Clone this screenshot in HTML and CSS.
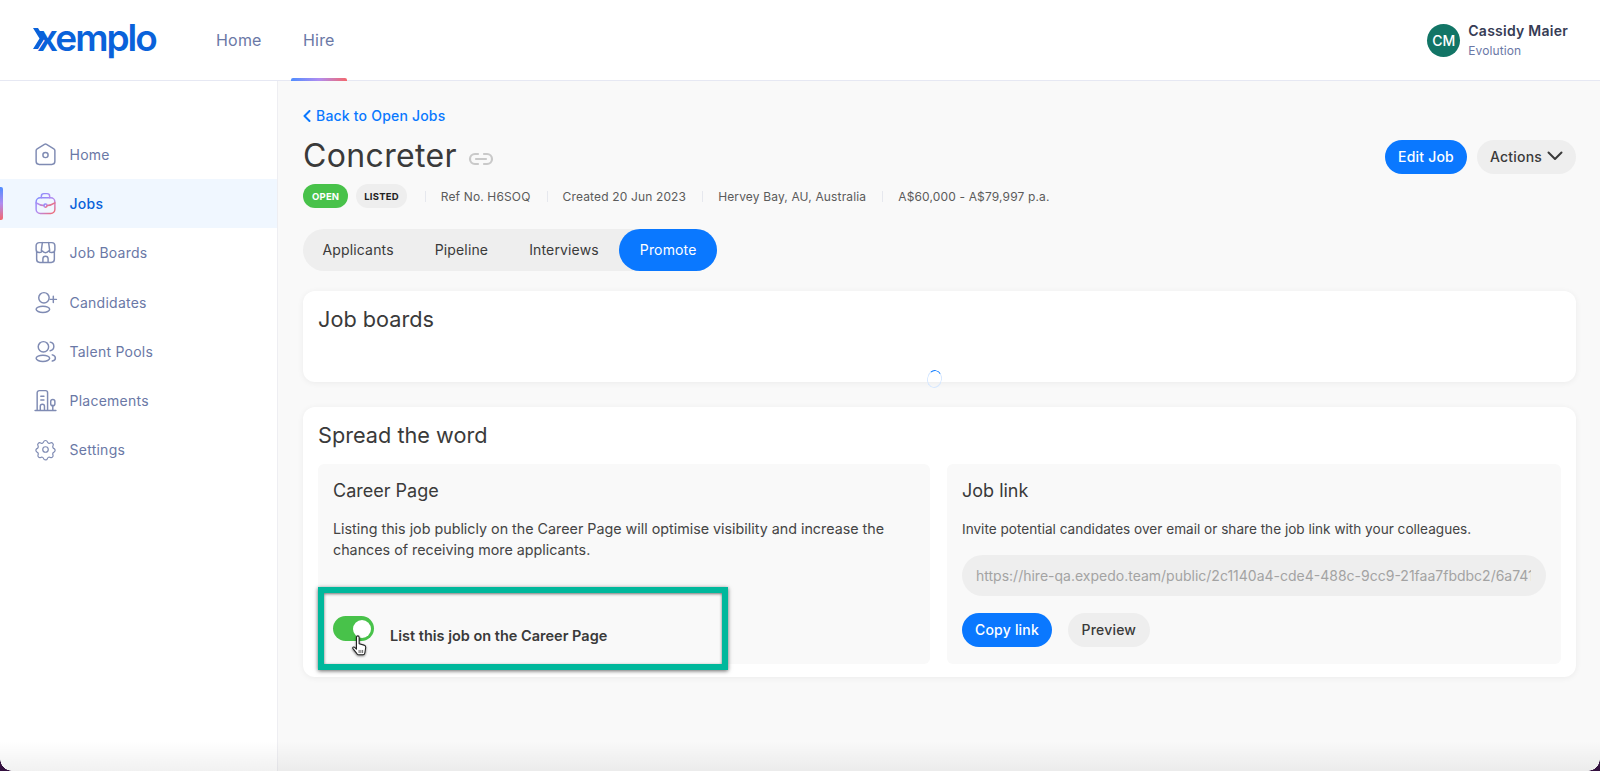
FILE: index.html
```html
<!DOCTYPE html>
<html lang="en">
<head>
<meta charset="utf-8">
<title>Concreter</title>
<link rel="stylesheet" href="styles.css">
</head>
<body>
<svg class="defs" width="0" height="0"><defs>
<linearGradient id="grad" x1="0" y1="0" x2="1" y2="1"><stop offset="0" stop-color="#7f8cff"/><stop offset=".5" stop-color="#b48bf0"/><stop offset="1" stop-color="#f4696d"/></linearGradient>
</defs></svg>
<div class="app">
  <header class="topbar">
    <div class="logo"><svg class="logo-mark" width="12" height="21" viewBox="0 0 12 21"><path d="M0 0h5l6.500 10.500L5 21H0l6.500-10.500z"/></svg><span class="logo-text">xemplo</span></div>
    <nav class="topnav">
      <a class="topnav-item">Home</a>
      <a class="topnav-item active">Hire</a>
    </nav>
    <div class="user">
      <div class="avatar">CM</div>
      <div class="user-info">
        <div class="user-name">Cassidy Maier</div>
        <div class="user-org">Evolution</div>
      </div>
    </div>
  </header>
  <div class="body">
    <aside class="sidebar">
      <a class="side-item"><svg class="ico" viewBox="0 0 24 24"><path d="M11 2.300a2 2 0 0 1 2 0l7 4.200a2 2 0 0 1 1 1.700v10.300a3 3 0 0 1-3 3H6a3 3 0 0 1-3-3V8.200a2 2 0 0 1 1-1.700z"/><circle cx="12" cy="12.500" r="2.500"/></svg>Home</a>
      <a class="side-item current"><svg class="ico ico-grad" viewBox="0 0 24 24"><rect x="3" y="6.500" width="18" height="15" rx="4"/><path d="M8 6.500V5a2.500 2.500 0 0 1 2.500-2.500h3A2.500 2.500 0 0 1 16 5v1.500M3 11.500c3 2 6 2.500 7.500 2.500M21 11.500c-3 2-6 2.500-7.500 2.500"/><circle cx="12" cy="14" r="1.500"/></svg>Jobs</a>
      <a class="side-item"><svg class="ico" viewBox="0 0 24 24"><path d="M6 2.500h12a3 3 0 0 1 3 3v3.500a3 3 0 0 1-3 3 3 3 0 0 1-3-1.500 3.500 3.500 0 0 1-6 0A3 3 0 0 1 6 12a3 3 0 0 1-3-3V5.500a3 3 0 0 1 3-3zM9 2.500 8 10M15 2.500l1 7.500M3.500 11v7.500a3 3 0 0 0 3 3h11a3 3 0 0 0 3-3V11M9.500 21.500V18a2.500 2.500 0 0 1 5 0v3.500"/></svg>Job Boards</a>
      <a class="side-item"><svg class="ico" viewBox="0 0 24 24"><circle cx="10.500" cy="7.500" r="5"/><ellipse cx="9.500" cy="18.500" rx="6.500" ry="3"/><path d="M19.500 6v6M16.500 9h6"/></svg>Candidates</a>
      <a class="side-item"><svg class="ico" viewBox="0 0 24 24"><circle cx="10" cy="7.500" r="5"/><ellipse cx="9.500" cy="18.500" rx="6.500" ry="3"/><path d="M16.500 3c2 .3 3.500 2 3.500 4.200s-1.500 3.700-3.500 4.100M18.500 15.200c2 .5 3 1.700 3 3s-1 2.600-3 3"/></svg>Talent Pools</a>
      <a class="side-item"><svg class="ico" viewBox="0 0 24 24"><path d="M2 21.500h20M4 21.500V4.500a2 2 0 0 1 2-2h6a2 2 0 0 1 2 2v17M7.500 8h3M7.500 11.500h3M7 21.500v-4a2 2 0 0 1 4 0v4M19 21.500v-5"/><rect x="17" y="11" width="4" height="6" rx="2"/></svg>Placements</a>
      <a class="side-item"><svg class="ico" viewBox="-2.500 -2.500 29 29"><circle cx="12" cy="12" r="3.200"/><path d="M9.800 3.200a2.300 2.300 0 0 1 4.400 0 2.300 2.300 0 0 0 3.400 1.300 2.300 2.300 0 0 1 3.100 3.200 2.300 2.300 0 0 0 1.300 3.300 2.300 2.300 0 0 1 0 4 2.300 2.300 0 0 0-1.300 3.400 2.300 2.300 0 0 1-3.100 2.800 2.300 2.300 0 0 0-3.400 1.300 2.300 2.300 0 0 1-4.400 0 2.300 2.300 0 0 0-3.400-1.300 2.300 2.300 0 0 1-3.100-2.800 2.300 2.300 0 0 0-1.300-3.400 2.300 2.300 0 0 1 0-4 2.300 2.300 0 0 0 1.300-3.300 2.300 2.300 0 0 1 3.100-3.200 2.300 2.300 0 0 0 3.400-1.300z"/></svg>Settings</a>
    </aside>
    <main class="main">
      <a class="back"><svg width="8" height="12" viewBox="0 0 8 12" class="back-ico"><path d="M6.500 1 1.500 6l5 5"/></svg>Back to Open Jobs</a>
      <div class="title-row">
        <h1 class="title">Concreter</h1>
        <svg class="link-ico" width="26" height="14" viewBox="0 0 26 14"><path d="M10 2H7a5 5 0 0 0 0 10h3M16 2h3a5 5 0 0 1 0 10h-3M8 7h10"/></svg>
        <div class="title-actions">
          <button class="btn btn-primary">Edit Job</button>
          <button class="btn btn-grey btn-actions">Actions<svg width="16" height="10" viewBox="0 0 16 10"><path d="M1.500 1.500 8 8l6.500-6.500"/></svg></button>
        </div>
      </div>
      <div class="meta">
        <span class="badge badge-open">OPEN</span>
        <span class="badge badge-listed">LISTED</span>
        <span class="meta-item">Ref No. H6SOQ</span>
        <span class="meta-item">Created 20 Jun 2023</span>
        <span class="meta-item">Hervey Bay, AU, Australia</span>
        <span class="meta-item">A$60,000 - A$79,997 p.a.</span>
      </div>
      <div class="tabs">
        <a class="tab">Applicants</a>
        <a class="tab">Pipeline</a>
        <a class="tab">Interviews</a>
        <a class="tab active">Promote</a>
      </div>
      <section class="card card-boards">
        <h2 class="card-title">Job boards</h2>
        <div class="spinner"></div>
      </section>
      <section class="card card-spread">
        <h2 class="card-title">Spread the word</h2>
        <div class="panels">
          <div class="panel">
            <h3 class="panel-title">Career Page</h3>
            <p class="panel-text">Listing this job publicly on the Career Page will optimise visibility and increase the chances of receiving more applicants.</p>
            <div class="toggle-row">
              <span class="toggle"><span class="knob"></span></span>
              <span class="toggle-label">List this job on the Career Page</span>
              <div class="highlight"></div>
              <svg class="cursor" width="20" height="25" viewBox="0 0 20 25"><path d="M6 2.500a1.500 1.500 0 0 1 3 0v7.500l5.500 1.500c1.500.5 2 1.500 2 2.500l-1 6.500c-.2 1.200-1 2-2 2H8.500c-1 0-1.500-.5-2-1.300L2 15.500c-.8-1.300.8-2.600 2-1.500l2 2z"/><path class="cursor-lines" d="M9 17v3.500M11 17v3.500M13 17v3.500"/></svg>
            </div>
          </div>
          <div class="panel">
            <h3 class="panel-title">Job link</h3>
            <p class="panel-text panel-text-narrow">Invite potential candidates over email or share the job link with your colleagues.</p>
            <div class="url-box"><span class="url">https://hire-qa.expedo.team/public/2c1140a4-cde4-488c-9cc9-21faa7fbdbc2/6a741</span></div>
            <div class="link-actions">
              <button class="btn btn-primary">Copy link</button>
              <button class="btn btn-grey">Preview</button>
            </div>
          </div>
        </div>
      </section>
    </main>
  </div>
  <div class="edge"></div>
</div>
</body>
</html>
```
FILE: styles.css
```css
* { box-sizing: border-box; }
html, body { margin: 0; height: 100%; }
body { font-family: Inter, "Liberation Sans", sans-serif; color: #333; background: #f9f9f9; overflow: hidden; }
.defs { position: absolute; }
.app { height: 771px; display: flex; flex-direction: column; position: relative; overflow: hidden; }

.topbar { height: 81px; flex: none; background: #fff; border-bottom: 1px solid #e6e8f3; display: flex; align-items: center; padding: 0 32px 0 33px; }
.logo { display: flex; align-items: center; width: 158px; height: 40px; position: relative; margin-top: -1px; }
.logo-mark { fill: #0a62da; flex: none; margin-top: -2px; }
.logo-text { font-weight: 600; font-size: 37px; letter-spacing: -2px; color: #0a62da; line-height: 40px; margin-top: -4px; margin-left: -8px; }
.topnav { display: flex; align-self: stretch; margin-left: 25px; }
.topnav-item { width: 71px; margin-right: -30px; display: flex; align-items: center; font-size: 16px; letter-spacing: .2px; color: #6a78a6; position: relative; padding-bottom: 1px; }
.topnav-item:first-child { width: 87px; margin-right: 0; }
.topnav-item.active::after { content: ""; position: absolute; left: -12px; width: 56px; bottom: -1px; height: 3px; border-radius: 2px 2px 0 0; background: linear-gradient(90deg, #4f8dff, #b08cf0, #f4676c); }
.user { margin-left: auto; display: flex; align-items: center; gap: 8px; }
.avatar { width: 33px; height: 33px; border-radius: 50%; background: #127566; color: #fff; font-size: 14px; font-weight: 500; display: flex; align-items: center; justify-content: center; }
.user-name { font-size: 14px; font-weight: 600; letter-spacing: .25px; color: #363c55; line-height: 20px; }
.user-org { font-size: 12px; letter-spacing: .1px; color: #6a78a6; line-height: 18px; margin-top: 1px; }

.body { flex: 1; display: flex; min-height: 0; }
.sidebar { width: 278px; flex: none; background: #fff; border-right: 1px solid #eeeef2; padding-top: 48.500px; }
.side-item { height: 49.300px; display: flex; align-items: center; gap: 12px; padding-left: 32.500px; font-size: 14px; letter-spacing: .25px; color: #6a78a6; position: relative; }
.side-item.current { background: #f0f7ff; color: #0a62da; font-weight: 500; }
.side-item.current::before { content: ""; position: absolute; left: 0; top: 8px; bottom: 8px; width: 3px; border-radius: 0 2px 2px 0; background: linear-gradient(180deg, #4f8dff, #b08cf0, #f4676c); }
.ico { width: 25px; height: 25px; fill: none; stroke: #7f8bb3; stroke-width: 1.400; stroke-linecap: round; stroke-linejoin: round; flex: none; }
.ico-grad { stroke: url(#grad); }

.main { flex: 1; min-width: 0; padding: 26px 24px 0 25px; }
.back { display: flex; align-items: center; gap: 5px; font-size: 14px; font-weight: 500; letter-spacing: .2px; color: #0a78ff; line-height: 18px; }
.back-ico { fill: none; stroke: #0a78ff; stroke-width: 2; stroke-linecap: round; stroke-linejoin: round; }
.title-row { display: flex; align-items: center; height: 44px; margin-top: 9px; }
.title { margin: 0; font-size: 32px; font-weight: 400; letter-spacing: .35px; color: #3a3a3a; line-height: 44px; }
.link-ico { margin-left: 11px; margin-top: 5px; fill: none; stroke: #c9c9c9; stroke-width: 2.200; stroke-linecap: round; }
.title-actions { margin-left: auto; display: flex; gap: 10px; margin-top: 2px; }
.btn { border: 0; height: 34px; border-radius: 17px; padding: 0 13px 2px; font-family: inherit; font-size: 14px; font-weight: 500; letter-spacing: .2px; display: inline-flex; align-items: center; }
.btn-primary { background: #0a78ff; color: #fff; }
.btn-grey { background: #eeeeee; color: #3a3a3a; }
.btn-actions { gap: 5px; }
.btn-actions svg { fill: none; stroke: #3a3a3a; stroke-width: 2; stroke-linecap: round; stroke-linejoin: round; }
.meta { display: flex; align-items: center; margin-top: 6px; height: 24px; }
.badge { height: 24px; border-radius: 12px; font-size: 9.500px; font-weight: 700; display: inline-flex; align-items: center; padding: 0 9px; letter-spacing: .2px; }
.badge-open { background: #48c24a; color: #fff; margin-right: 8px; }
.badge-listed { background: #eeeeee; color: #222; margin-right: 18px; padding: 0 8px; }
.meta-item { font-size: 12px; color: #5b5b5b; letter-spacing: .15px; padding: 0 16px; position: relative; }
.meta-item::before { content: ""; position: absolute; left: 0; top: 2px; bottom: 2px; width: 1px; background: #e6e8ee; }
.tabs { display: inline-flex; align-items: stretch; margin-top: 21px; height: 42px; background: #eeeeee; border-radius: 21px; }
.tab { display: flex; align-items: center; padding: 0 20.500px 2px; font-size: 14px; color: #3a3a3a; letter-spacing: .15px; }
.tab:first-child { padding-left: 19.500px; }
.tab.active { background: #0a78ff; color: #fff; border-radius: 21px; }
.card { background: #fff; border-radius: 12px; box-shadow: 0 1px 6px rgba(0, 0, 0, .06); padding: 15px; position: relative; }
.card-boards { height: 91px; margin-top: 20px; }
.card-spread { height: 270px; margin-top: 25px; }
.card-title { margin: 1px 0 0; font-size: 21.700px; font-weight: 400; color: #3a3a3a; line-height: 24px; }
.spinner { position: absolute; left: 624px; top: 79px; width: 15px; height: 18px; border-radius: 50%; border: 1.500px solid #d5e7ff; border-top-color: #0a78ff; transform: rotate(10deg); }
.panels { display: grid; grid-template-columns: 612px 1fr; gap: 17px; margin-top: 17px; height: 197px; }
.panel { background: #f9f9f9; border-radius: 6px; padding: 16px 15px 15px; display: flex; flex-direction: column; min-width: 0; }
.panel-title { margin: 0; font-size: 18px; font-weight: 400; line-height: 22px; color: #3a3a3a; }
.panel-text { margin: 16px 0 0; font-size: 14.300px; line-height: 21px; color: #444; }
.panel-text-narrow { font-size: 13.600px; margin-top: 17px; }
.toggle-row { display: flex; align-items: center; gap: 16px; position: relative; margin-top: 55px; height: 34px; }
.toggle { width: 41px; height: 25px; border-radius: 13px; background: #48c24a; position: relative; flex: none; margin-top: -7px; }
.knob { position: absolute; right: 3px; top: 3.500px; width: 18px; height: 18px; border-radius: 50%; background: #fff; }
.toggle-label { font-size: 14.500px; font-weight: 600; color: #3a3a3a; margin-top: 7px; }
.highlight { position: absolute; left: -15px; top: -28px; width: 410px; height: 83px; border: 6px solid #00b89c; box-shadow: 0 1px 4px rgba(0, 0, 0, .6), inset 0 1px 3px rgba(0, 0, 0, .55); pointer-events: none; }
.cursor { position: absolute; left: 18px; top: 20px; width: 18px; height: 22px; fill: #fff; stroke: #222; stroke-width: 1.200; stroke-linejoin: round; filter: drop-shadow(0 1px 1px rgba(0, 0, 0, .5)); }
.cursor-lines { fill: none; stroke-width: .8; }
.url-box { margin-top: 15px; height: 41px; border-radius: 21px; background: #eeeeee; padding: 0 15px 0 14px; display: flex; align-items: center; }
.url { display: block; overflow: hidden; white-space: nowrap; font-size: 14px; color: #a3a3a3; width: 100%; }
.link-actions { display: flex; gap: 16px; margin-top: 17px; }
.link-actions .btn-grey { padding: 0 13.500px 2px; }
.edge { position: absolute; left: 0; right: 0; bottom: 0; height: 30px; pointer-events: none; background: linear-gradient(180deg, rgba(0, 0, 0, 0), rgba(0, 0, 0, .055)); }
.edge::before, .edge::after { content: ""; position: absolute; bottom: 0; width: 12px; height: 12px; }
.edge::before { left: 0; background: radial-gradient(circle at 100% 0, transparent 11.500px, #34113f 12px); }
.edge::after { right: 0; background: radial-gradient(circle at 0 0, transparent 11.500px, #34113f 12px); }
```
